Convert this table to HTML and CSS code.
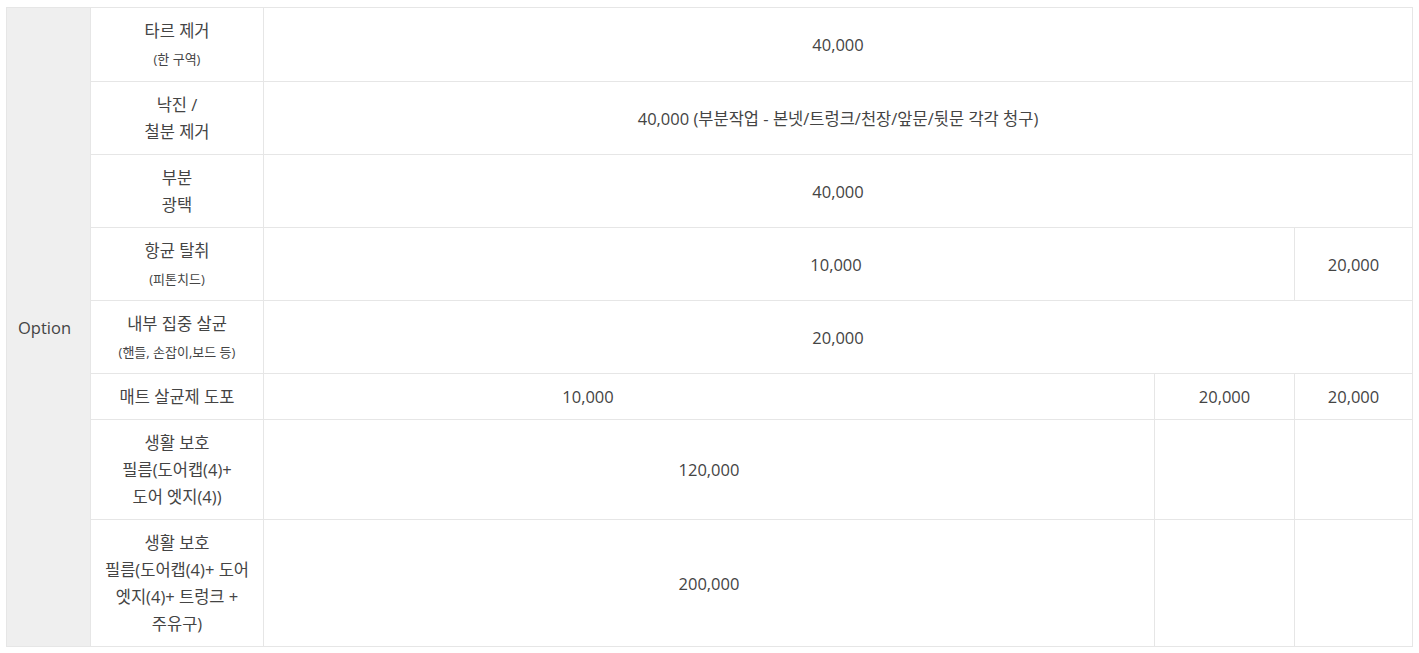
FILE: index.html
```html
<!DOCTYPE html>
<html lang="ko">
<head>
    <meta charset="UTF-8">
    <meta name="viewport" content="width=device-width, initial-scale=1.0">
    <title>Option</title>
    <link rel="stylesheet" href="styles.css">
</head>
<body>
    <div class="wrap">
        <table class="price-table">
            <colgroup>
                <col class="col-head">
                <col class="col-name">
                <col class="col-main">
                <col class="col-mid">
                <col class="col-last">
            </colgroup>
            <tbody>
                <tr class="first-row">
                    <th class="group" rowspan="8">Option</th>
                    <td class="name">타르 제거<br><span class="sub">(한 구역)</span></td>
                    <td colspan="3">40,000</td>
                </tr>
                <tr>
                    <td class="name">낙진 /<br>철분 제거</td>
                    <td colspan="3">40,000 (부분작업 - 본넷/트렁크/천장/앞문/뒷문 각각 청구)</td>
                </tr>
                <tr>
                    <td class="name">부분<br>광택</td>
                    <td colspan="3">40,000</td>
                </tr>
                <tr>
                    <td class="name">항균 탈취<br><span class="sub">(피톤치드)</span></td>
                    <td colspan="2" class="shift-right">10,000</td>
                    <td>20,000</td>
                </tr>
                <tr>
                    <td class="name">내부 집중 살균<br><span class="sub">(핸들, 손잡이,보드 등)</span></td>
                    <td colspan="3">20,000</td>
                </tr>
                <tr>
                    <td class="name">매트 살균제 도포</td>
                    <td class="shift-left">10,000</td>
                    <td>20,000</td>
                    <td>20,000</td>
                </tr>
                <tr>
                    <td class="name">생활 보호<br>필름(도어캡(4)+<br>도어 엣지(4))</td>
                    <td>120,000</td>
                    <td></td>
                    <td></td>
                </tr>
                <tr>
                    <td class="name">생활 보호<br>필름(도어캡(4)+ 도어<br>엣지(4)+ 트렁크 +<br>주유구)</td>
                    <td>200,000</td>
                    <td></td>
                    <td></td>
                </tr>
            </tbody>
        </table>
    </div>
</body>
</html>
```

FILE: styles.css
```css
body {
    margin: 0;
    font-family: 'Open Sans', 'Noto Sans CJK KR', sans-serif;
    color: #444;
    background: #fff;
}

.wrap {
    padding: 7px 7px 0 6px;
}

.price-table {
    width: 1406px;
    border-collapse: collapse;
    table-layout: fixed;
    font-size: 16.5px;
    line-height: 27px;
}

.col-head {
    width: 84px;
}

.col-name {
    width: 173px;
}

.col-main {
    width: 891px;
}

.col-mid {
    width: 140px;
}

.col-last {
    width: 118px;
}

.price-table th,
.price-table td {
    border: 1px solid #e6e6e6;
    padding: 9px 6px;
    text-align: center;
    vertical-align: middle;
    font-weight: normal;
}

.price-table .first-row td {
    padding-bottom: 10px;
}

.price-table .group {
    background: #efefef;
    text-align: left;
    padding-left: 11px;
}

.sub {
    font-size: 13px;
    line-height: 1;
}

.price-table .shift-right {
    padding-left: 120px;
}

.price-table .shift-left {
    padding-right: 248px;
}
```
